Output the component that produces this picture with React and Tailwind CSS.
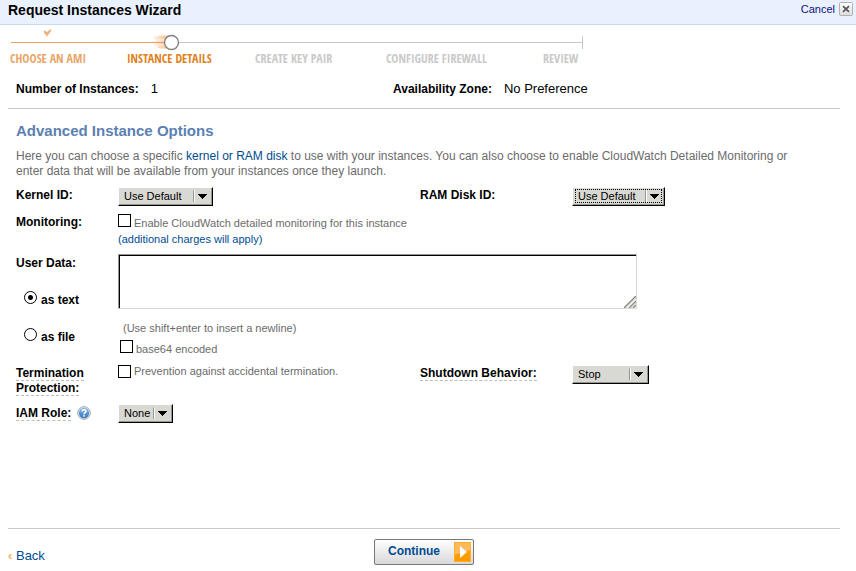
import React from "react";

const labelText = "text-[12px] leading-[15px] font-bold text-black";
const hintText = "text-[11px] leading-4 text-[#6b6b6b]";
const helpTerm = "border-b border-dashed border-[#bdbdbd]";
const checkbox =
  "m-0 size-[13px] shrink-0 appearance-none border border-black bg-white checked:bg-black";
const radio =
  "m-0 size-[13px] shrink-0 appearance-none rounded-full border border-black bg-white checked:bg-[radial-gradient(circle,#000_0_2px,#fff_3px)]";

function SelectBox({ id, options, width, focused }) {
  return (
    <div
      className={`relative h-[19px] ${width} border border-t-white border-l-white border-r-black border-b-black bg-[#d9d9d4] shadow-[inset_-1px_-1px_0_#96968e]`}
    >
      <select
        id={id}
        className="block h-full w-full appearance-none bg-transparent pb-px pl-[5px] text-[11px] leading-4 text-black outline-none"
      >
        {options.map((o) => (
          <option key={o}>{o}</option>
        ))}
      </select>
      {focused && (
        <span className="pointer-events-none absolute inset-x-0.5 top-px bottom-0.5 border border-dotted border-black" />
      )}
      <svg
        className="pointer-events-none absolute top-0 right-0"
        width="19"
        height="17"
        viewBox="0 0 19 17"
      >
        <path d="M0.5 2.5V14" stroke="#96968e" fill="none" />
        <path d="M1.5 2.5V14" stroke="#fff" fill="none" />
        <path d="M5 6h9v1h-1v1h-1v1h-1v1h-1v1h-1v-1h-1v-1h-1v-1h-1v-1h-1z" fill="#000" />
      </svg>
    </div>
  );
}

function StepTrack() {
  return (
    <svg className="block" width="574" height="26" viewBox="0 0 574 26">
      <defs>
        <linearGradient id="trail" x1="0" x2="1" y1="0" y2="0">
          <stop offset="0" stopColor="#f3a55d" stopOpacity="0" />
          <stop offset="1" stopColor="#f3a55d" stopOpacity="0.5" />
        </linearGradient>
      </defs>
      <path d="M160 17.5H572" stroke="#c8c8c8" />
      <path d="M572.5 11V24" stroke="#c8c8c8" />
      <path d="M1 17.5H156" stroke="#eba265" />
      <path
        d="M148 10h13v2h-17v2h16v2h-18v3h18v2h-16v2h18v1h-12v-1h8v-11h-10z"
        fill="url(#trail)"
      />
      <path d="M144 11h16v12h-12v-2h-4v-2h-4v-3h5v-3h-3z" fill="url(#trail)" />
      <circle cx="161.5" cy="17.5" r="7" fill="#fff" stroke="#828282" strokeWidth="1.4" />
      <path d="M34 5l3 2 3.5-3 .8 2-4.3 5.5-3-3.5z" fill="#f0b47d" />
    </svg>
  );
}

function CloseIcon() {
  return (
    <svg width="14" height="14" viewBox="0 0 14 14">
      <defs>
        <linearGradient id="closeBg" x1="0" x2="0" y1="0" y2="1">
          <stop offset="0" stopColor="#fff" />
          <stop offset="1" stopColor="#dcdcdc" />
        </linearGradient>
      </defs>
      <rect x="0.5" y="0.5" width="13" height="13" rx="1" fill="url(#closeBg)" stroke="#b0b0b0" />
      <path d="M4 4.2l6 5.6M10 4.2l-6 5.6" stroke="#555" strokeWidth="1.7" />
    </svg>
  );
}

function HelpIcon() {
  return (
    <svg width="14" height="14" viewBox="0 0 14 14">
      <defs>
        <linearGradient id="helpBg" x1="0" x2="0" y1="0" y2="1">
          <stop offset="0" stopColor="#8db9e8" />
          <stop offset="1" stopColor="#2f74c0" />
        </linearGradient>
      </defs>
      <circle cx="7" cy="7" r="6.4" fill="#e2e4e8" stroke="#a3a7ad" strokeWidth="0.9" />
      <circle cx="7" cy="7" r="5.2" fill="url(#helpBg)" />
      <path
        d="M5 5.4C5.1 3.3 9.1 3.3 9 5.4C8.9 6.7 7.1 6.7 7 8.2"
        fill="none"
        stroke="#fff"
        strokeWidth="1.5"
      />
      <rect x="6.2" y="9.1" width="1.6" height="1.6" fill="#fff" />
    </svg>
  );
}

function PlayIcon() {
  return (
    <svg width="17" height="20" viewBox="0 0 17 20">
      <rect width="17" height="20" fill="#ff9a00" />
      <path d="M0 0h17v8L0 13z" fill="#fdbb5d" />
      <rect x="0.5" y="0.5" width="16" height="19" fill="none" stroke="#fdb022" />
      <path d="M6 4l7 6-7 6z" fill="#fff" />
    </svg>
  );
}

const steps = [
  { name: "CHOOSE AN AMI", color: "text-[#e8a567]" },
  { name: "INSTANCE DETAILS", color: "text-[#e07f1c]" },
  { name: "CREATE KEY PAIR", color: "text-[#c9c9c9]" },
  { name: "CONFIGURE FIREWALL", color: "text-[#c9c9c9]" },
  { name: "REVIEW", color: "text-[#c9c9c9]" },
];

export default function App() {
  return (
    <div className="flex min-h-screen flex-col bg-white font-['Liberation_Sans',Arial,sans-serif]">
      <header className="flex h-[25px] items-start justify-between border-b border-[#c5ddf1] bg-[#eaf1fe] pr-[3px] pl-2">
        <h1 className="pt-0.5 text-[14px] leading-4 font-bold text-black">
          Request Instances Wizard
        </h1>
        <button type="button" className="flex items-center gap-1 pt-0.5 text-[11px] leading-[14px] text-[#101080]">
          Cancel
          <CloseIcon />
        </button>
      </header>

      <nav className="pl-2.5" aria-label="Wizard steps">
        <StepTrack />
        <ol className="grid grid-cols-[117px_128px_131px_157px_auto] font-['Open_Sans_Condensed','Lato',sans-serif] text-[12px] leading-[15px] font-bold whitespace-nowrap">
          {steps.map((s) => (
            <li key={s.name} className={s.color}>
              {s.name}
            </li>
          ))}
        </ol>
      </nav>

      <main className="mr-4 ml-2 flex-1">
        <dl className="grid grid-cols-[377px_auto] border-b border-[#c9c9c9] px-2 pt-[15px] pb-[11px]">
          <div className="flex items-baseline gap-3">
            <dt className={labelText}>Number of Instances:</dt>
            <dd className="text-[13px] leading-4">1</dd>
          </div>
          <div className="flex items-baseline gap-3">
            <dt className={labelText}>Availability Zone:</dt>
            <dd className="text-[13px] leading-4">No Preference</dd>
          </div>
        </dl>

        <section className="px-2 pt-[13px]">
          <h2 className="text-[15px] leading-[17px] font-bold text-[#5b80b2]">
            Advanced Instance Options
          </h2>
          <p className="mt-2.5 pr-7 text-[12px] leading-[15px] text-[#6b6b6b]">
            Here you can choose a specific{" "}
            <a href="#kernel" className="text-[#004b91]">
              kernel or RAM disk
            </a>{" "}
            to use with your instances. You can also choose to enable CloudWatch Detailed
            Monitoring or enter data that will be available from your instances once they launch.
          </p>

          <form id="options" className="mt-2">
            <div className="grid h-[27px] grid-cols-[102px_302px_152px_auto] items-start">
              <label htmlFor="kernel" className={`pt-px ${labelText}`}>
                Kernel ID:
              </label>
              <SelectBox id="kernel" options={["Use Default"]} width="w-[95px]" />
              <label htmlFor="ramdisk" className={`pt-px ${labelText}`}>
                RAM Disk ID:
              </label>
              <SelectBox id="ramdisk" options={["Use Default"]} width="w-[93px]" focused />
            </div>

            <div className="grid h-10 grid-cols-[102px_auto] items-start">
              <span className={`pt-px ${labelText}`}>Monitoring:</span>
              <div className={hintText}>
                <div className="flex items-start gap-[3px]">
                  <input id="monitoring" type="checkbox" className={checkbox} />
                  <label htmlFor="monitoring" className="pt-px">
                    Enable CloudWatch detailed monitoring for this instance
                  </label>
                </div>
                <a href="#charges" className="block text-[#004b91]">
                  (additional charges will apply)
                </a>
              </div>
            </div>

            <div className="grid h-[111px] grid-cols-[102px_auto] items-start">
              <div className="pt-0.5">
                <label htmlFor="userdata" className={`block ${labelText}`}>
                  User Data:
                </label>
                <div className="flex gap-1 pt-5 pl-2">
                  <input id="astext" type="radio" name="source" defaultChecked className={radio} />
                  <label htmlFor="astext" className={`pt-0.5 ${labelText}`}>
                    as text
                  </label>
                </div>
                <div className="flex gap-1 pt-5 pl-2">
                  <input id="asfile" type="radio" name="source" className={radio} />
                  <label htmlFor="asfile" className={`pt-0.5 ${labelText}`}>
                    as file
                  </label>
                </div>
              </div>
              <div>
                <div className="relative w-[519px]">
                  <textarea
                    id="userdata"
                    className="block h-[55px] w-full resize-none border border-t-[#96968e] border-r-[#d9d9d4] border-b-[#d9d9d4] border-l-[#96968e] bg-white p-1 text-[12px] shadow-[inset_1px_1px_0_#000] outline-none"
                  />
                  <svg
                    className="pointer-events-none absolute right-px bottom-px"
                    width="12"
                    height="12"
                    viewBox="0 0 12 12"
                  >
                    <path d="M0 12L12 0M5 12L12 5M9 12l3-3" stroke="#85857d" strokeWidth="1.4" />
                    <path d="M2 12L12 2M7 12l5-5" stroke="#d9d9d4" />
                  </svg>
                </div>
                <p className={`pt-[11px] pl-[5px] ${hintText}`}>
                  (Use shift+enter to insert a newline)
                </p>
                <div className="flex gap-[3px] pt-1 pl-0.5">
                  <input id="base64" type="checkbox" className={checkbox} />
                  <label htmlFor="base64" className={`pt-px ${hintText}`}>
                    base64 encoded
                  </label>
                </div>
              </div>
            </div>

            <div className="grid h-[39px] grid-cols-[102px_302px_152px_auto] items-start">
              <span className={`w-20 pt-px ${labelText}`}>
                <span className={helpTerm}>Termination Protection:</span>
              </span>
              <div className="flex gap-[3px]">
                <input id="termination" type="checkbox" className={checkbox} />
                <label htmlFor="termination" className="text-[11px] leading-[13px] text-[#6b6b6b]">
                  Prevention against accidental termination.
                </label>
              </div>
              <label htmlFor="shutdown" className={`pt-px ${labelText}`}>
                <span className={helpTerm}>Shutdown Behavior:</span>
              </label>
              <SelectBox id="shutdown" options={["Stop", "Terminate"]} width="w-[77px]" />
            </div>

            <div className="grid grid-cols-[102px_auto] items-start">
              <div className="flex items-start gap-1.5 pt-0.5">
                <label htmlFor="iam" className={labelText}>
                  <span className={helpTerm}>IAM Role:</span>
                </label>
                <button type="button" aria-label="Help">
                  <HelpIcon />
                </button>
              </div>
              <SelectBox id="iam" options={["None"]} width="w-[55px]" />
            </div>
          </form>
        </section>
      </main>

      <footer className="mr-4 ml-2 grid h-[43px] grid-cols-[366px_auto] items-start justify-start border-t border-[#c9c9c9] pt-2.5">
        <a href="#back" className="pt-[9px] text-[13px] leading-4 text-[#004b91]">
          <span className="text-[#f0982d]">‹</span> Back
        </a>
        <button
          type="submit"
          form="options"
          className="flex h-[26px] w-[100px] items-center justify-between rounded-xs border border-[#777] bg-linear-to-b from-white via-[#ececee] to-[#d8d8da] pr-0.5 pl-[13px] text-[12px] leading-4 font-bold text-[#004b91]"
        >
          <span className="pb-0.5">Continue</span>
          <PlayIcon />
        </button>
      </footer>
    </div>
  );
}
